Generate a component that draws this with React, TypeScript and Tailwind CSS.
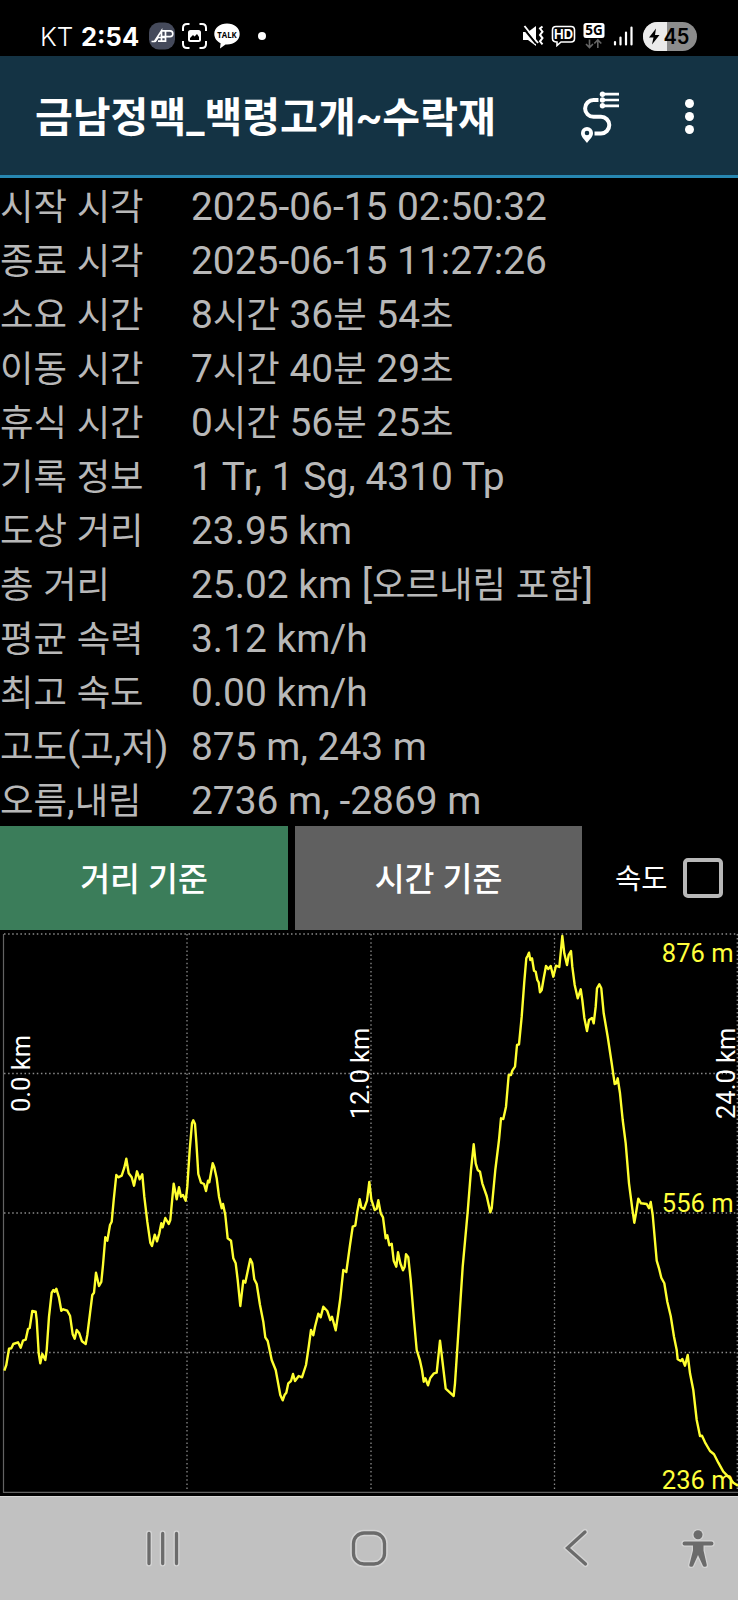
import React, { useState } from 'react'

const rows = [
  { label: '시작 시각', value: '2025-06-15 02:50:32' },
  { label: '종료 시각', value: '2025-06-15 11:27:26' },
  { label: '소요 시간', value: '8시간 36분 54초' },
  { label: '이동 시간', value: '7시간 40분 29초' },
  { label: '휴식 시간', value: '0시간 56분 25초' },
  { label: '기록 정보', value: '1 Tr, 1 Sg, 4310 Tp' },
  { label: '도상 거리', value: '23.95 km' },
  { label: '총 거리', value: '25.02 km [오르내림 포함]' },
  { label: '평균 속력', value: '3.12 km/h' },
  { label: '최고 속도', value: '0.00 km/h' },
  { label: '고도(고,저)', value: '875 m, 243 m' },
  { label: '오름,내림', value: '2736 m, -2869 m' },
]

// elevation profile, x = distance, y = height (top is 876 m)
const profile =
  '4.3,440.7 6.3,435 9,418.7 11.3,418.3 13.3,414 18,412.3 20.7,417.7 23,410.7 25.7,409.7 28,399 29.7,398 32.3,381 35.7,381.7 36.7,390 38.7,423.3 40.3,433.3 42.3,424 45.3,430 46.7,420 49,386.7 51.7,362.7 53.3,360 54.7,361.7 56.3,358.7 59,367.7 61.3,380.7 63.3,379.3 67.3,380.7 70,385.7 72.7,404.3 74.7,408.7 76.7,400 79.3,403.3 82,411.3 85.7,414 87.3,405 90,383.3 92.3,365 94,362.7 96,342.7 99,356 101.3,352 103,335 105.3,307.3 107.3,310.7 110,295 111.7,291.7 113.7,270 116.3,245 118.3,247.3 121.7,245.7 124.3,237.7 126.3,228.7 128.7,243.3 131.7,247.3 134,255.7 137,241.3 139.7,249.3 142.3,244.3 144.3,266.7 147.3,291.7 150.3,312.7 152,316 154.7,304.7 157,311.3 159.3,303.3 161.3,293.3 162.7,297.3 165.3,288 168.7,294 170.3,290 172,271.7 173.7,253.7 176.7,269.3 179,257.3 181,266.7 183,265 185.7,270.7 187.3,256.7 189.7,220 192,193.3 193.3,190.3 195,194 196.3,211.7 198.3,244 201,252.7 204,254 206,261 208,250.7 209.3,252.3 212.7,233.3 214.3,237.3 216.7,248.3 219,266.7 221.7,278.3 223,274 225.3,285 227.7,308.3 231,310.7 233.3,328.3 235.7,333.3 237.7,350 240.3,376 ' +
  '243.3,350.7 245.3,352.7 248.3,338.3 250.3,329 252.3,333.3 254.3,349.3 256.7,354 260,375 263.3,391.7 265.3,407.3 267.7,411 271.7,430 275.7,440 280.3,465 282.7,470.3 284.7,464.7 286.3,462.7 288.3,453.3 291,451 293,444 295,451 298.7,446 302,447.3 306,435 308.7,416.7 311,400 313.3,405.3 315,396.7 318.3,383.7 320.7,387.3 323.3,376.7 327.3,381 330.3,390 332,386.7 335.7,400.3 338,385 340.3,368.3 343.3,340 346.3,342 350,315 352.7,296.7 355.3,295.7 357.3,281.7 359.7,269.3 361.3,277.3 364,279 367,270.7 369.3,252 371.3,269.3 374.7,280 376.7,278.7 378.3,270.3 380.7,283.3 383,287.3 385.7,308.3 387.3,305.3 389.3,315.3 391.7,313.7 393.7,330.7 396.3,336.7 398,322.3 400.3,333.3 403,340.3 404.7,336.7 406,324.3 408.3,327.3 410.7,350 414,390 416.7,420 420,430.7 422,440 423.7,451.7 425.3,448.3 428,455.3 430.3,448 434,443.3 436.7,442.7 440,410.7 442.3,430 445.7,458.7 450,462.7 453.7,466 455,453.3 458.3,403.3 462.7,336.7 467.7,281.7 471,240 473.7,214.3 475.7,233.3 477.7,240 480,241.7 482.3,253.3 486.7,266 490.3,282.3 ' +
  '491.7,278.3 495.3,240 499,210 501,188.3 503.3,189 506,176.7 508.7,145 511,145 512.3,140.7 515,136.7 517,115 519,114.3 521.7,86.7 524.3,51.7 526.3,28.3 527.7,25.7 529,22.7 530.3,30 532,28.3 534,40.7 535.7,41.7 537.3,50 538.7,52.3 540,62.3 541.7,60 543.7,48.3 546,36 548.3,39 550.7,36 553.3,46.7 556,35.7 559.3,37 561,20 562.3,6 564.3,23.3 567,35 568.7,25 571,21 572.3,36.7 574.7,55 577.7,68.3 580.7,59.3 582.3,70 584.3,87.7 587,101 589,90 592,88 593.7,93.3 595.7,76.7 597,58.3 599.3,54.3 601.3,58.3 603.7,83.3 607.7,106.7 611.7,133.3 614.7,154 616.3,153.3 617.7,148.3 620,163.3 622.7,190 625.7,213.3 629,253.3 632,276.7 634.3,292.7 636,283.3 638.3,268.7 641,273.3 646.7,274 649,278.3 650.7,272 652.7,285 656.7,330.7 659,338.3 661.3,347.7 664.3,353.3 667.3,371.7 670.7,386 674,406.7 676.7,420 677.7,429.3 680.7,431 682.3,429 685,435.7 687.7,425 690,443.3 693.3,460 696.7,490 700,506 702,505.7 705,512.3 710,521 714,524.3 718.3,532.7 723.3,541.7 730,548.3 733.3,552.7 738,555.7'

// hangul is set a bit smaller than the latin glyphs next to it
function Mixed({ text }: any) {
  return (
    <>
      {text.split(/([가-힣]+)/).map((part: string, i: number) =>
        i % 2 === 1 ? (
          <span key={i} className="text-[36.400px] leading-none">{part}</span>
        ) : (
          part
        )
      )}
    </>
  )
}

function StatusBar() {
  return (
    <div className="flex h-14 items-center justify-between bg-black pt-4 pr-[41px] pl-10 text-white">
      <div className="flex items-center">
        <span className="w-[41px] pt-0.5 font-['Inter',sans-serif] text-[26px] font-light leading-10">KT</span>
        <span className="w-[68px] pt-0.5 font-['Inter',sans-serif] text-[25.500px] font-bold leading-10">2:54</span>
        <svg width="26" height="28" viewBox="0 0 26 28">
          <rect x="0" y="0.500" width="26" height="27" rx="10" fill="#454a5b" />
          <path d="M2.500 19.500h3L12.500 8.800V20M6 19.800l3-4.300h7M9 19.200h7.500M16.500 20V8.800M13 8.800h8q2.800 0 2.800 2.900t-2.800 2.900h-8" fill="none" stroke="#fff" strokeWidth="1.700" />
        </svg>
        <svg className="ml-[7px]" width="25" height="26" viewBox="0 0 25 26" fill="none" stroke="#fff" strokeWidth="2">
          <path d="M1 8V5q0-4 4-4h2.500M17.500 1H20q4 0 4 4v3M24 18v3q0 4-4 4h-2.500M7.500 25H5q-4 0-4-4v-3" />
          <rect x="6" y="7" width="13" height="12" rx="2.500" fill="#fff" stroke="none" />
          <path d="M8 17v-2l3-3 1.500 1.500L15 11l2 3v3z" fill="#000" stroke="none" />
        </svg>
        <svg className="ml-[7px]" width="26" height="26" viewBox="0 0 26 26">
          <path d="M13 0.500c7.200 0 12.700 4.500 12.700 10.500S20.200 21.500 13 21.500l-1.500-.1L6 25.500l.6-5.300C2.800 18.400.3 15 .3 11 .3 5 5.800.5 13 .5z" fill="#fff" />
          <text x="13" y="14.500" textAnchor="middle" fontFamily="Open Sans, sans-serif" fontWeight="700" fontSize="9.500" textLength="19.500" lengthAdjust="spacingAndGlyphs" fill="#000">TALK</text>
        </svg>
        <span className="ml-[18px] h-2 w-2 rounded-full bg-white" />
      </div>
      <div className="flex items-center">
        <svg width="22" height="22" viewBox="0 0 22 22" fill="none" stroke="#fff">
          <path d="M1 7h5l8-6v20l-8-6H1z" fill="#fff" stroke="none" />
          <path d="M1 2.500l13 16" stroke="#000" strokeWidth="2" />
          <path d="M2.500 1L16 18" strokeWidth="1.900" />
          <path d="M20.500 1.500l-2.500 2 2.500 3.200-2.500 3.200 2.500 3.200-2.500 3.200 2.500 3" strokeWidth="2" />
        </svg>
        <svg className="ml-[7px]" width="25" height="22" viewBox="0 0 25 22">
          <path d="M5 1.500h15q3.500 0 3.500 3.500v8.500q0 3.500-3.500 3.500h-10l-4 3.500V17q-4.500 0-4.500-3.500V5q0-3.500 3.500-3.500z" fill="none" stroke="#fff" strokeWidth="1.600" />
          <text x="12.500" y="14" textAnchor="middle" fontFamily="Inter, sans-serif" fontWeight="700" fontSize="13" textLength="19" lengthAdjust="spacingAndGlyphs" fill="#fff">HD</text>
        </svg>
        <svg className="ml-[7px]" width="22" height="28" viewBox="0 0 22 28">
          <rect x="0.500" y="1" width="21" height="15" rx="2.500" fill="#fff" />
          <text x="11" y="13.300" textAnchor="middle" fontFamily="Open Sans, sans-serif" fontWeight="700" fontSize="13.500" fill="#000">5G</text>
          <path d="M6.500 17.500v7.500M3 22l3.500 3.500 3.500-3.500M14.800 26v-7.500M11.300 21.500l3.500-3.500 3.500 3.500" fill="none" stroke="#666" strokeWidth="1.600" />
        </svg>
        <svg className="ml-2" width="20" height="20" viewBox="0 0 20 20" stroke="#fff" strokeWidth="2.200" strokeLinecap="round">
          <path d="M2 16v2.500M7.500 11.500v7M13 6.500v12M18.500 1.500v17" />
        </svg>
        <svg className="ml-[10px]" width="54" height="29" viewBox="0 0 54 29">
          <rect width="54" height="29" rx="14.500" fill="#8c8c8c" />
          <path d="M14.500 0H24v29h-9.500a14.500 14.500 0 010-29z" fill="#ebebeb" />
          <path d="M13 6.500L6 15.500h4.500L9 22.500 16.500 13H12z" fill="#000" />
          <text x="20.500" y="21.500" fontFamily="Inter, sans-serif" fontWeight="600" fontSize="21" textLength="26" lengthAdjust="spacingAndGlyphs" fill="#000">45</text>
        </svg>
      </div>
    </div>
  )
}

function TitleBar() {
  return (
    <div className="flex h-[122px] items-center border-b-[3px] border-[#2787b1] bg-[#143344] pl-[35px] text-white">
      <h1 className="w-[544px] whitespace-nowrap pt-[7px] font-['Roboto','Noto_Sans_CJK_KR',sans-serif] text-[41.100px] font-bold leading-none">
        금남정맥_백령고개~수락재
      </h1>
      <svg width="42" height="54" viewBox="0 0 42 54" fill="none" stroke="#fff">
        <path d="M19.500 11H14.500a8.300 8.300 0 000 16.800H22a8.300 8.300 0 010 16.600H15.500" strokeWidth="4" />
        <path d="M26 5.200H40M26 11H40M26 16.800H40" strokeWidth="2.700" />
        <g fill="#fff" stroke="none">
          <circle cx="23.500" cy="5.200" r="2.700" />
          <circle cx="23.500" cy="11" r="2.700" />
          <circle cx="23.500" cy="16.800" r="2.700" />
          <path fillRule="evenodd" d="M8 38a6 6 0 016 6c0 4-3.500 6.500-6 10C5.500 50.500 2 48 2 44a6 6 0 016-6zm0 3.700a2.300 2.300 0 100 4.600 2.300 2.300 0 000-4.600z" />
        </g>
      </svg>
      <div className="ml-[64px] flex flex-col gap-1 pt-0.5">
        <span className="h-[9px] w-[9px] rounded-full bg-white" />
        <span className="h-[9px] w-[9px] rounded-full bg-white" />
        <span className="h-[9px] w-[9px] rounded-full bg-white" />
      </div>
    </div>
  )
}

function Chart() {
  return (
    <svg className="block" width="738" height="566" viewBox="0 0 738 566">
      <g stroke="#8a8a8a" strokeWidth="1.300" strokeDasharray="1.500 2.600">
        <path d="M4 4H738M4 143.500H738M4 283H738M4 422.500H738" />
        <path d="M187 4V561M371 4V561M554.500 4V561M737.300 4V561" />
      </g>
      <path d="M3.500 4V562.300H738" fill="none" stroke="#636363" strokeWidth="1.200" />
      <polyline points={profile} fill="none" stroke="#ffff30" strokeWidth="2.400" strokeLinejoin="round" />
      <g fontFamily="Roboto, sans-serif" fontSize="25.500" fill="#ffff3c" textAnchor="end">
        <text x="733.500" y="31.500">876 m</text>
        <text x="733.500" y="282">556 m</text>
        <text x="733.500" y="558.500">236 m</text>
      </g>
      <g fontFamily="Roboto, sans-serif" fontSize="25.500" fill="#fff">
        <text transform="translate(29.500 182) rotate(-90)">0.0 km</text>
        <text transform="translate(369 189) rotate(-90)">12.0 km</text>
        <text transform="translate(734.500 189) rotate(-90)">24.0 km</text>
      </g>
    </svg>
  )
}

function NavBar() {
  return (
    <div className="flex h-[104px] items-center border-t border-[#d8d8d8] bg-[#c1c1c1]">
      <svg className="ml-[144px]" width="38" height="40" viewBox="0 0 38 40" strokeLinecap="round" fill="none">
        <path d="M5 4.500v30M18.700 4.500v30M32.500 4.500v30" stroke="#d4d4d4" strokeWidth="6" />
        <path d="M5 4.500v30M18.700 4.500v30M32.500 4.500v30" stroke="#6b6b6b" strokeWidth="3.300" />
      </svg>
      <svg className="ml-[167px]" width="40" height="40" viewBox="0 0 40 40" fill="none">
        <rect x="4.500" y="4" width="31" height="31" rx="10.500" stroke="#d4d4d4" strokeWidth="6.500" />
        <rect x="4.500" y="4" width="31" height="31" rx="10.500" stroke="#6b6b6b" strokeWidth="3.300" />
      </svg>
      <svg className="ml-[172px]" width="32" height="42" viewBox="0 0 32 42" fill="none" strokeLinecap="round">
        <path d="M24 4L6.500 20 24.500 36" stroke="#d4d4d4" strokeWidth="6" />
        <path d="M24 4L6.500 20 24.500 36" stroke="#6b6b6b" strokeWidth="3.300" />
      </svg>
      <svg className="ml-[88px]" width="34" height="42" viewBox="0 0 34 42">
        <g fill="#6b6b6b" stroke="#d4d4d4" strokeWidth="2.500" strokeLinejoin="round" paintOrder="stroke">
          <circle cx="17" cy="6.700" r="4.500" />
          <path d="M3.500 13.500h27a1.900 1.900 0 010 3.900H22.500V22.500l3.300 14.500q.3 1.800-1.500 1.800h-1q-1 0-1.400-1L17 27 12.200 37.800q-.4 1-1.400 1h-1q-1.800 0-1.500-1.800L12 22.500v-5.100H3.500a1.900 1.900 0 010-3.900z" />
        </g>
      </svg>
    </div>
  )
}

function App() {
  const [mode, setMode] = useState('dist')
  const [speed, setSpeed] = useState(false)

  return (
    <div className="flex h-[1600px] w-[738px] flex-col overflow-hidden bg-black font-['Roboto','Noto_Sans_CJK_KR',sans-serif]">
      <StatusBar />
      <TitleBar />
      <div className="flex flex-col text-[38.900px] text-[#b8b8b8]">
        {rows.map((row) => (
          <div key={row.label} className="flex h-[54px] items-center whitespace-nowrap pt-1 leading-[50px]">
            <span className="w-[191px]"><Mixed text={row.label} /></span>
            <span><Mixed text={row.value} /></span>
          </div>
        ))}
      </div>
      <div className="flex h-[105px] items-center pb-px text-white">
        <button
          className={`h-full w-[288px] pt-[5px] text-[32.500px] font-medium ${mode === 'dist' ? 'bg-[#3b7d5a]' : 'bg-[#606060]'}`}
          onClick={() => setMode('dist')}
        >
          거리 기준
        </button>
        <button
          className={`ml-[7px] h-full w-[287px] pt-[5px] text-[32.500px] font-medium ${mode === 'time' ? 'bg-[#3b7d5a]' : 'bg-[#606060]'}`}
          onClick={() => setMode('time')}
        >
          시간 기준
        </button>
        <span className="ml-[33px] w-[68px] pt-[5px] text-[28.500px]">속도</span>
        <button
          className="h-[40px] w-[40px] rounded-[5px] border-4 border-[#b8b8b8]"
          onClick={() => setSpeed(!speed)}
        >
          {speed ? '✓' : ''}
        </button>
      </div>
      <div className="-mt-px">
        <Chart />
      </div>
      <NavBar />
    </div>
  )
}

export default App
